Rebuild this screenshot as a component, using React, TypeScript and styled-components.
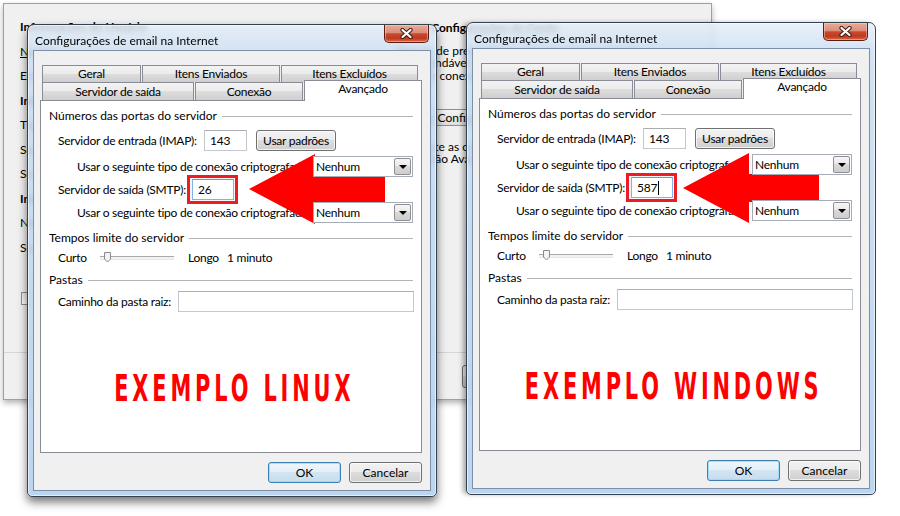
import React from 'react';
import styled, { createGlobalStyle, css } from 'styled-components';

const UI_FONT = `Lato, "Noto Sans", "Liberation Sans", sans-serif`;

const GlobalStyle = createGlobalStyle`
  html, body { margin: 0; padding: 0; background: #fff; }
  body { width: 900px; height: 516px; overflow: hidden; font-family: ${UI_FONT}; font-size: 12px; color: #000; }
  * { box-sizing: border-box; }
`;

const Desktop = styled.div`
  position: relative;
  width: 900px;
  height: 516px;
  overflow: hidden;
  background: #fff;
`;

/* ---------- background window ---------- */
const BgWindow = styled.div`
  position: absolute;
  left: 3px;
  top: 3px;
  width: 709px;
  height: 397px;
  background: #f0f0f0;
  border: 1px solid #a0a0a0;
  box-shadow: 0 3px 6px rgba(0, 0, 0, 0.3);
  display: flex;
  flex-direction: column;
`;

const BgBody = styled.div`
  flex: 1;
  display: flex;
`;

const BgCol = styled.div<{ $w?: number; $pl: number }>`
  ${(p) => (p.$w ? `width: ${p.$w}px;` : 'flex: 1;')}
  padding: 16px 0 0 ${(p) => p.$pl}px;
  display: flex;
  flex-direction: column;
`;

const BgLine = styled.div<{ $bold?: boolean; $mt?: number }>`
  height: 14px;
  line-height: 14px;
  white-space: nowrap;
  font-weight: ${(p) => (p.$bold ? 700 : 400)};
  margin-top: ${(p) => p.$mt ?? 0}px;
`;

const Under = styled.span`
  text-decoration: underline;
`;

const BgCheck = styled.div<{ $mt: number }>`
  width: 13px;
  height: 13px;
  margin: ${(p) => p.$mt}px 0 0 1px;
  border: 1px solid #8e8f8f;
  background: linear-gradient(#ececec, #fff);
`;

const BgBox = styled.div<{ $mt: number }>`
  width: 180px;
  height: 17px;
  margin-top: ${(p) => p.$mt}px;
  border: 1px solid #8e8e8e;
  border-radius: 2px;
  background: linear-gradient(#f4f4f4, #dedede);
  padding-left: 6px;
  line-height: 15px;
  white-space: nowrap;
`;

const BgFooter = styled.div`
  height: 47px;
  border-top: 1px solid #d6d6d6;
  display: flex;
  align-items: center;
  padding-left: 458px;
  gap: 8px;
`;

const BgButton = styled.div`
  width: 75px;
  height: 23px;
  border: 1px solid #707070;
  border-radius: 3px;
  background: linear-gradient(#f2f2f2 0%, #ebebeb 49%, #dddddd 50%, #cfcfcf 100%);
  display: flex;
  align-items: center;
  justify-content: center;
`;

/* ---------- dialog ---------- */
const DialogFrame = styled.div<{ $left: number; $top: number; $shadow: 'full' | 'side' }>`
  position: absolute;
  left: ${(p) => p.$left}px;
  top: ${(p) => p.$top}px;
  width: 410px;
  height: 473px;
  border: 1px solid #34414f;
  border-radius: 7px 7px 5px 5px;
  padding: 0 5px 5px 5px;
  background: linear-gradient(
    180deg,
    rgba(228, 237, 247, 0.8) 0px,
    rgba(200, 221, 243, 0.82) 30px,
    rgba(178, 208, 240, 0.88) 100%
  );
  backdrop-filter: blur(3px);
  box-shadow: inset 0 0 0 1px rgba(255, 255, 255, 0.6)
    ${(p) =>
      p.$shadow === 'full'
        ? ', 0 5px 10px rgba(0,0,0,0.55)'
        : ', -4px 0 5px -1px rgba(0,0,0,0.35)'};
  display: flex;
  flex-direction: column;
  z-index: 3;
`;

const TitleBar = styled.div`
  height: 25px;
  display: flex;
  align-items: flex-start;
  padding-left: 2px;
`;

const TitleText = styled.div`
  margin-top: 8px;
  line-height: 15px;
  font-size: 12px;
  white-space: nowrap;
`;

const CloseButton = styled.div`
  margin-left: auto;
  margin-right: 2px;
  width: 45px;
  height: 18px;
  border: 1px solid #5a1d12;
  border-top: none;
  border-radius: 0 0 5px 5px;
  background: linear-gradient(
    180deg,
    #e9ab99 0%,
    #dc8d79 45%,
    #c94a30 52%,
    #c0391e 78%,
    #d9694a 100%
  );
  box-shadow: inset 0 0 0 1px rgba(255, 220, 210, 0.45);
  display: flex;
  align-items: center;
  justify-content: center;
`;

const Client = styled.div`
  flex: 1;
  background: #f0f0f0;
  border: 1px solid #7d8fa5;
  padding: 14px 8px 7px 6px;
  display: flex;
  flex-direction: column;
  letter-spacing: -0.25px;
`;

const TabRow = styled.div<{ $h: number }>`
  display: flex;
  align-items: flex-end;
  height: ${(p) => p.$h}px;
  padding-left: 2px;
  gap: 1px;
`;

const Tab = styled.div<{ $w: number; $active?: boolean }>`
  width: ${(p) => p.$w}px;
  height: 100%;
  border: 1px solid #898c95;
  border-bottom: none;
  background: linear-gradient(#f3f3f3 0%, #ebebeb 49%, #dddddd 50%, #cfcfcf 100%);
  display: flex;
  align-items: center;
  justify-content: center;
  line-height: 14px;
  white-space: nowrap;
  flex-shrink: 0;
  ${(p) =>
    p.$active &&
    css`
      height: 21px;
      margin-bottom: -1px;
      background: #fff;
      position: relative;
      z-index: 2;
      align-items: flex-start;
      padding-top: 1px;
    `}
`;

const Panel = styled.div`
  position: relative;
  height: 353px;
  background: #fff;
  border: 1px solid #898c95;
  padding: 0 8px;
  display: flex;
  flex-direction: column;
`;

const GroupHeader = styled.div<{ $mt: number }>`
  display: flex;
  align-items: center;
  gap: 5px;
  height: 16px;
  line-height: 14px;
  margin-top: ${(p) => p.$mt}px;
  white-space: nowrap;
  letter-spacing: 0;
  &::after {
    content: '';
    flex: 1;
    height: 1px;
    background: #b4b4b4;
  }
`;

const FieldRow = styled.div<{ $mt: number; $indent: number; $h: number }>`
  display: flex;
  align-items: center;
  height: ${(p) => p.$h}px;
  margin-top: ${(p) => p.$mt}px;
  padding-left: ${(p) => p.$indent}px;
`;

const Label = styled.span<{ $w: number }>`
  width: ${(p) => p.$w}px;
  flex-shrink: 0;
  white-space: nowrap;
  line-height: 14px;
`;

const TextBox = styled.div<{ $w: number; $focus?: boolean }>`
  width: ${(p) => p.$w}px;
  height: 21px;
  flex-shrink: 0;
  background: #fff;
  border: 1px solid #c3c7cf;
  border-top-color: #abadb3;
  padding-left: 5px;
  display: flex;
  align-items: center;
  line-height: 14px;
  ${(p) =>
    p.$focus &&
    css`
      border-color: #7eb4ea;
      border-top-color: #569de5;
    `}
`;

const Caret = styled.span`
  width: 1px;
  height: 14px;
  background: #000;
  margin-left: 1px;
`;

const Highlight = styled.div`
  display: flex;
  flex-shrink: 0;
  margin: 0 -4px 0 -5px;
  padding: 1px 1px 1px 2px;
  border: 3px solid #ec1c24;
  background: #f4f6f8;
`;

const WinButton = styled.div<{ $w: number; $ml?: number; $default?: boolean }>`
  width: ${(p) => p.$w}px;
  height: 21px;
  flex-shrink: 0;
  margin-left: ${(p) => p.$ml ?? 0}px;
  border: 1px solid #707070;
  border-radius: 3px;
  background: linear-gradient(#f2f2f2 0%, #ebebeb 49%, #dddddd 50%, #cfcfcf 100%);
  box-shadow: inset 0 0 0 1px rgba(255, 255, 255, 0.7);
  display: flex;
  align-items: center;
  justify-content: center;
  line-height: 14px;
  white-space: nowrap;
  ${(p) =>
    p.$default &&
    css`
      border-color: #3c7fb1;
      background: linear-gradient(#eef6fc 0%, #e2eef8 49%, #d3e5f3 50%, #c5dcee 100%);
      box-shadow: inset 0 0 0 1px rgba(150, 220, 250, 0.8);
    `}
`;

const Select = styled.div`
  position: relative;
  z-index: 2;
  width: 100px;
  height: 21px;
  flex-shrink: 0;
  background: #fff;
  border: 1px solid #a5acb5;
  display: flex;
  align-items: center;
  padding-left: 2px;
  line-height: 14px;
`;

const DropButton = styled.div`
  margin-left: auto;
  margin-right: 1px;
  width: 17px;
  height: 17px;
  border: 1px solid #8f8f8f;
  border-radius: 2px;
  background: linear-gradient(#f6f6f6 0%, #e8e8e8 49%, #d9d9d9 50%, #cdcdcd 100%);
  display: flex;
  align-items: center;
  justify-content: center;
  &::after {
    content: '';
    border-top: 4px solid #000;
    border-left: 4px solid transparent;
    border-right: 4px solid transparent;
    margin-top: 1px;
  }
`;

const SliderTrack = styled.div`
  position: relative;
  width: 74px;
  height: 4px;
  margin-right: 14px;
  flex-shrink: 0;
  border-top: 1px solid #a9a9a9;
  border-bottom: 1px solid #e6e6e6;
  background: #f2f2f2;
`;

const SliderThumb = styled.svg`
  position: absolute;
  left: 4px;
  top: -5px;
`;

const Arrow = styled.svg<{ $x: number; $y: number }>`
  position: absolute;
  left: ${(p) => p.$x}px;
  top: ${(p) => p.$y}px;
  z-index: 1;
  pointer-events: none;
`;

const Caption = styled.div`
  margin-top: 56px;
  height: 40px;
  display: flex;
  align-items: center;
  justify-content: center;
`;

const CaptionText = styled.span`
  display: inline-block;
  font-family: 'DejaVu Sans', 'Liberation Sans', sans-serif;
  font-weight: 700;
  font-size: 38px;
  line-height: 40px;
  letter-spacing: 7px;
  margin-right: -7px;
  color: #ff0000;
  white-space: nowrap;
  transform: scaleX(0.55);
  transform-origin: center;
`;

const ButtonBar = styled.div`
  margin-top: 9px;
  display: flex;
  justify-content: flex-end;
  gap: 8px;
  letter-spacing: 0;
`;

type DialogProps = {
  left: number;
  top: number;
  shadow: 'full' | 'side';
  smtp: string;
  caret?: boolean;
  caption: string;
  arrowX: number;
  arrowY: number;
};

function Dialog(p: DialogProps) {
  return (
    <DialogFrame $left={p.left} $top={p.top} $shadow={p.shadow}>
      <TitleBar>
        <TitleText>Configurações de email na Internet</TitleText>
        <CloseButton>
          <svg width="13" height="11" viewBox="0 0 13 11">
            <path d="M2.5 2 L10.5 9 M10.5 2 L2.5 9" stroke="#3d1a12" strokeWidth="4.2" strokeLinecap="round" />
            <path d="M2.5 2 L10.5 9 M10.5 2 L2.5 9" stroke="#ffffff" strokeWidth="2.3" strokeLinecap="round" />
          </svg>
        </CloseButton>
      </TitleBar>
      <Client>
        <TabRow $h={17}>
          <Tab $w={99}>Geral</Tab>
          <Tab $w={138}>Itens Enviados</Tab>
          <Tab $w={137}>Itens Excluídos</Tab>
        </TabRow>
        <TabRow $h={18}>
          <Tab $w={152}>Servidor de saída</Tab>
          <Tab $w={108}>Conexão</Tab>
          <Tab $w={118} $active>
            Avançado
          </Tab>
        </TabRow>
        <Panel>
          <Arrow $x={p.arrowX} $y={p.arrowY} width="136" height="70" viewBox="0 0 136 70">
            <polygon points="0,35 66,0 66,21 136,21 136,49 66,49 66,70" fill="#ff0000" />
          </Arrow>
          <GroupHeader $mt={7}>Números das portas do servidor</GroupHeader>
          <FieldRow $mt={6} $indent={9} $h={21}>
            <Label $w={146}>Servidor de entrada (IMAP):</Label>
            <TextBox $w={43}>143</TextBox>
            <WinButton $w={80} $ml={9}>
              Usar padrões
            </WinButton>
          </FieldRow>
          <FieldRow $mt={5} $indent={28} $h={21}>
            <Label $w={236}>Usar o seguinte tipo de conexão criptografada:</Label>
            <Select>
              Nenhum
              <DropButton />
            </Select>
          </FieldRow>
          <FieldRow $mt={2} $indent={9} $h={21}>
            <Label $w={134}>Servidor de saída (SMTP):</Label>
            <Highlight>
              <TextBox $w={42} $focus>
                {p.smtp}
                {p.caret && <Caret />}
              </TextBox>
            </Highlight>
          </FieldRow>
          <FieldRow $mt={2} $indent={28} $h={21}>
            <Label $w={236}>Usar o seguinte tipo de conexão criptografada:</Label>
            <Select>
              Nenhum
              <DropButton />
            </Select>
          </FieldRow>
          <GroupHeader $mt={7}>Tempos limite do servidor</GroupHeader>
          <FieldRow $mt={4} $indent={9} $h={16}>
            <Label $w={42}>Curto</Label>
            <SliderTrack>
              <SliderThumb width="7" height="11" viewBox="0 0 7 11">
                <polygon points="0.5,0.5 6.5,0.5 6.5,7 3.5,10 0.5,7" fill="#f3f3f3" stroke="#8a8a8a" />
              </SliderThumb>
            </SliderTrack>
            <Label $w={39}>Longo</Label>
            <Label $w={60}>1 minuto</Label>
          </FieldRow>
          <GroupHeader $mt={6}>Pastas</GroupHeader>
          <FieldRow $mt={3} $indent={9} $h={21}>
            <Label $w={120}>Caminho da pasta raiz:</Label>
            <TextBox $w={236} />
          </FieldRow>
          <Caption>
            <CaptionText>{p.caption}</CaptionText>
          </Caption>
        </Panel>
        <ButtonBar>
          <WinButton $w={73} $default>
            OK
          </WinButton>
          <WinButton $w={73}>Cancelar</WinButton>
        </ButtonBar>
      </Client>
    </DialogFrame>
  );
}

function BackgroundWindow() {
  return (
    <BgWindow>
      <BgBody>
        <BgCol $w={392} $pl={16}>
          <BgLine $bold>Informações do Usuário</BgLine>
          <BgLine $mt={10.5}>
            <Under>N</Under>ome:
          </BgLine>
          <BgLine $mt={10.5}>Endereço de Email:</BgLine>
          <BgLine $bold $mt={10.5}>Informações do Servidor</BgLine>
          <BgLine $mt={10.5}>Tipo de Conta:</BgLine>
          <BgLine $mt={10.5}>Servidor de entrada de emails:</BgLine>
          <BgLine $mt={10.5}>Servidor de saída de emails (SMTP):</BgLine>
          <BgLine $bold $mt={10.5}>Informações de Logon</BgLine>
          <BgLine $mt={10.5}>Nome de Usuário:</BgLine>
          <BgLine $mt={10.5}>Senha:</BgLine>
          <BgCheck $mt={37} />
        </BgCol>
        <BgCol $pl={0}>
          <BgLine $bold $mt={1}>Testar Configurações da Conta</BgLine>
          <BgLine $mt={9}>Depois de preencher as informações nesta tela, é</BgLine>
          <BgLine $mt={-2}>recomendável testar sua conta clicando no botão</BgLine>
          <BgLine $mt={-1}>(Requer conexão de rede)</BgLine>
          <BgBox $mt={26}>Testar Configurações da Conta...</BgBox>
          <BgLine $mt={14}>&nbsp;&nbsp;&nbsp;&nbsp;&nbsp;&nbsp;&nbsp;Teste as configurações da conta clicando no</BgLine>
          <BgLine $mt={-2}>&nbsp;&nbsp;&nbsp;&nbsp;&nbsp;&nbsp;&nbsp;botão Avançar</BgLine>
        </BgCol>
      </BgBody>
      <BgFooter>
        <BgButton>&lt; Voltar</BgButton>
        <BgButton>Avançar &gt;</BgButton>
        <BgButton>Cancelar</BgButton>
      </BgFooter>
    </BgWindow>
  );
}

export default function App() {
  return (
    <>
      <GlobalStyle />
      <Desktop>
        <BackgroundWindow />
        <Dialog left={27} top={24} shadow="full" smtp="26" caption="EXEMPLO LINUX" arrowX={208} arrowY={53} />
        <Dialog
          left={466}
          top={22}
          shadow="side"
          smtp="587"
          caret
          caption="EXEMPLO WINDOWS"
          arrowX={203}
          arrowY={54}
        />
      </Desktop>
    </>
  );
}
